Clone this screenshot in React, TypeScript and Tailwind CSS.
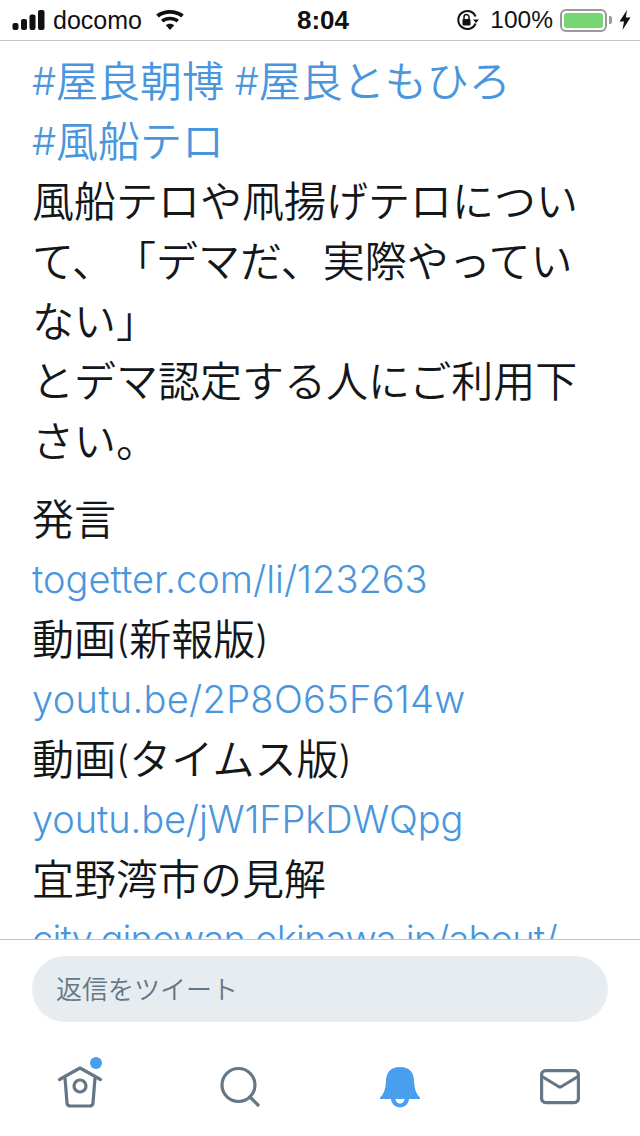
import React from 'react';

const font = "font-['Inter','Noto_Sans_CJK_JP',sans-serif]";

function Line({ children, link }: { children: React.ReactNode; link?: boolean }) {
  return (
    <div className={link ? 'h-[60px] whitespace-nowrap text-[#4a96dc]' : 'h-[60px] whitespace-nowrap text-[#14171a]'}>
      {children}
    </div>
  );
}

// latin runs are a touch narrower than the kana next to them
function Latin({ children, className }: { children: React.ReactNode; className?: string }) {
  return <span className={`text-[38px] font-light leading-none align-[2px] ${className ?? ''}`}>{children}</span>;
}

function StatusBar() {
  return (
    <div className="h-[41px] shrink-0 border-b border-[#bdc6cf] flex items-center justify-between pl-3 pr-[9px] text-[#111] bg-white relative font-['Liberation_Sans',sans-serif]">
      <div className="flex items-center">
        <svg width="33" height="20" viewBox="0 0 33 20" className="mr-2">
          <rect x="0.5" y="13" width="6" height="7" rx="2" fill="#111" />
          <rect x="9" y="9" width="6" height="11" rx="2" fill="#111" />
          <rect x="17.5" y="4.5" width="6" height="15.5" rx="2" fill="#111" />
          <rect x="26" y="0" width="6.5" height="20" rx="2" fill="#111" />
        </svg>
        <span className="text-[25px] leading-none mr-[14px]">docomo</span>
        <svg width="28" height="20" viewBox="0 0 28 20">
          <path d="M14 20 L9.8 15.2 C12.2 13.2 15.8 13.2 18.2 15.2 Z" fill="#111" />
          <path d="M7.4 12.4 L5 9.8 C9.8 5.6 18.2 5.6 23 9.8 L20.6 12.4 C16.8 9.4 11.2 9.4 7.4 12.4 Z" fill="#111" />
          <path d="M2.8 7.4 L0.2 4.6 C7.6 -1.4 20.4 -1.4 27.8 4.6 L25.2 7.4 C19 2.6 9 2.6 2.8 7.4 Z" fill="#111" />
        </svg>
      </div>
      <span className="absolute left-[297px] top-[5px] text-[26px] leading-[30px] font-bold">8:04</span>
      <div className="flex items-center">
        <svg width="24" height="22" viewBox="0 0 24 22" className="mr-[10px]">
          <path d="M19.6 14.5 A9 9 0 1 1 19.6 7.5" fill="none" stroke="#111" strokeWidth="2" />
          <path d="M17 10.5 H23 L20 14 Z" fill="#111" />
          <rect x="6.5" y="10" width="8" height="6.5" rx="1" fill="#111" />
          <path d="M8 10 V8 a2.5 2.5 0 0 1 5 0 V10" fill="none" stroke="#111" strokeWidth="1.5" />
        </svg>
        <span className="text-[24.5px] leading-none mr-[7px]">100%</span>
        <div className="w-[47px] h-[23px] rounded-[6px] border-2 border-[#9a9a9a] p-[2px]">
          <div className="w-full h-full rounded-[3px] bg-[#76d672]" />
        </div>
        <div className="w-[3px] h-2 bg-[#9a9a9a] rounded-r-[2px] ml-[2px] mr-[7px]" />
        <svg width="12" height="20" viewBox="0 0 12 20">
          <path d="M8 0 L0.5 11.5 H5 L3.5 20 L11.5 7.5 H6.8 Z" fill="#111" />
        </svg>
      </div>
    </div>
  );
}

function TweetBody() {
  return (
    <div className="flex-1 min-h-0 overflow-hidden pl-8 pt-[11px] text-[42px] leading-[60px] font-[350] [text-spacing-trim:space-all]">
      <Line link><Latin>#</Latin>屋良朝博<Latin> #</Latin>屋良ともひろ</Line>
      <Line link><Latin>#</Latin>風船テロ</Line>
      <Line>風船テロや凧揚げテロについ</Line>
      <Line>て、「デマだ、実際やってい</Line>
      <Line>ない」</Line>
      <Line>とデマ認定する人にご利用下</Line>
      <Line>さい。</Line>
      <div className="h-[18px]" />
      <Line>発言</Line>
      <Line link><Latin>togetter.com/li/123263</Latin></Line>
      <Line>動画<Latin>(</Latin>新報版<Latin>)</Latin></Line>
      <Line link><Latin className="tracking-[0.3px]">youtu.be/2P8O65F614w</Latin></Line>
      <Line>動画<Latin>(</Latin>タイムス版<Latin>)</Latin></Line>
      <Line link><Latin className="tracking-[-0.1px]">youtu.be/jW1FPkDWQpg</Latin></Line>
      <Line>宜野湾市の見解</Line>
      <Line link><Latin className="tracking-[-0.8px]">city.ginowan.okinawa.jp/about/</Latin></Line>
    </div>
  );
}

function TabBar() {
  const grey = '#657786';
  const blue = '#4a9eee';
  return (
    <div className="h-[197px] shrink-0 bg-white border-t border-[#bdc6cf]">
      <div className="px-8 pt-4">
        <div className="h-[66px] rounded-[33px] bg-[#e6ecf0] flex items-center pl-6 text-[26px] text-[#657786] font-[350]">
          返信をツイート
        </div>
      </div>
      <div className="grid grid-cols-4 mt-[35px]">
        <div className="flex justify-center">
          <svg width="48" height="56" viewBox="0 0 48 56">
            <circle cx="40" cy="6" r="6" fill={blue} />
            <path d="M3.5 22.5 L24 11 L44.5 22.5 M9 21 L11 46 Q11.3 49 14.5 49 H33.5 Q36.7 49 37 46 L39 21" fill="none" stroke={grey} strokeWidth="3.2" strokeLinecap="round" strokeLinejoin="round" />
            <circle cx="24" cy="29" r="6" fill="none" stroke={grey} strokeWidth="3.2" />
          </svg>
        </div>
        <div className="flex justify-center">
          <svg width="48" height="56" viewBox="0 0 48 56">
            <circle cx="22.5" cy="28" r="16.5" fill="none" stroke={grey} strokeWidth="3.2" />
            <path d="M34 40 L42 48" fill="none" stroke={grey} strokeWidth="3.2" strokeLinecap="round" />
          </svg>
        </div>
        <div className="flex justify-center">
          <svg width="48" height="56" viewBox="0 0 48 56">
            <path d="M4 40.5 Q9.5 36 10 24 Q10.5 10 24 10 Q37.5 10 38 24 Q38.5 36 44 40.5 V42 H4 Z" fill={blue} />
            <path d="M15 42 A9 8.5 0 0 0 33 42 H28.5 A4.5 4.5 0 0 1 19.5 42 Z" fill={blue} />
          </svg>
        </div>
        <div className="flex justify-center">
          <svg width="48" height="56" viewBox="0 0 48 56">
            <rect x="5.6" y="13.6" width="36.8" height="32" rx="4" fill="none" stroke={grey} strokeWidth="3.2" />
            <path d="M6 19.5 L22.5 29.5 Q24 30.3 25.5 29.5 L42 19.5" fill="none" stroke={grey} strokeWidth="3.2" strokeLinejoin="round" />
          </svg>
        </div>
      </div>
    </div>
  );
}

export default function App() {
  return (
    <div className={`w-[640px] h-[1136px] flex flex-col overflow-hidden bg-white ${font}`}>
      <StatusBar />
      <TweetBody />
      <TabBar />
    </div>
  );
}
